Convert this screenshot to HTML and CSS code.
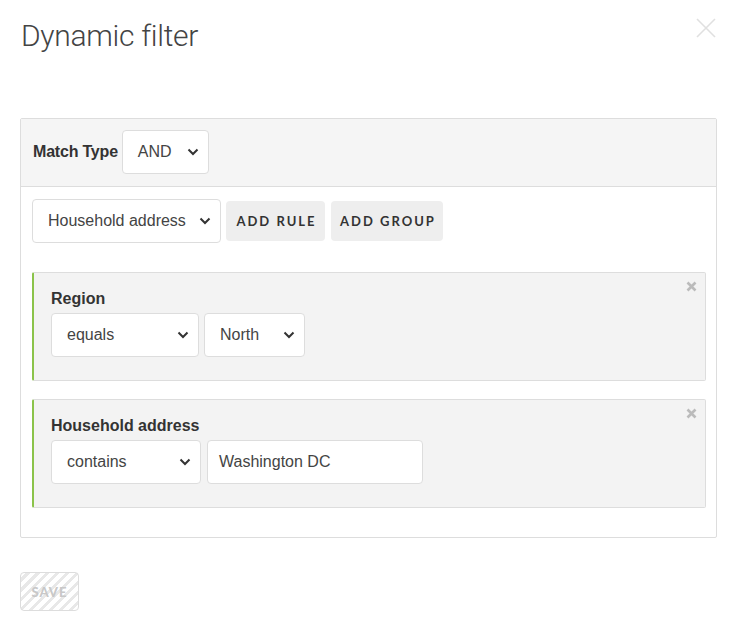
FILE: index.html
```html
<!DOCTYPE html>
<html>
<head>
<meta charset="utf-8">
<link rel="stylesheet" href="styles.css">
</head>
<body>
<div class="modal">
  <div class="modal-head">
    <h1 class="title">Dynamic filter</h1>
    <button class="close" aria-label="Close">
      <svg width="20" height="20" viewBox="0 0 20 20"><path d="M1 1 L19 19 M19 1 L1 19" stroke="#e0e0e0" stroke-width="1.6" fill="none"/></svg>
    </button>
  </div>

  <div class="panel">
    <div class="panel-head">
      <span class="label">Match Type</span>
      <div class="select sel-and"><span>AND</span><svg class="chev" width="12" height="8" viewBox="0 0 12 8"><path d="M1.5 1.5 L6 6 L10.5 1.5" stroke="#333" stroke-width="2" fill="none"/></svg></div>
    </div>
    <div class="panel-body">
      <div class="toolbar">
        <div class="select sel-field"><span>Household address</span><svg class="chev" width="12" height="8" viewBox="0 0 12 8"><path d="M1.5 1.5 L6 6 L10.5 1.5" stroke="#333" stroke-width="2" fill="none"/></svg></div>
        <button class="btn btn-rule">ADD RULE</button>
        <button class="btn btn-group">ADD GROUP</button>
      </div>

      <div class="rule">
        <button class="remove" aria-label="Remove"><svg width="11" height="11" viewBox="0 0 11 11"><path d="M1.5 1.5 L9.5 9.5 M9.5 1.5 L1.5 9.5" stroke="#bbb" stroke-width="2.6" fill="none"/></svg></button>
        <div class="rule-label">Region</div>
        <div class="rule-row">
          <div class="select sel-op1"><span>equals</span><svg class="chev" width="12" height="8" viewBox="0 0 12 8"><path d="M1.5 1.5 L6 6 L10.5 1.5" stroke="#333" stroke-width="2" fill="none"/></svg></div>
          <div class="select sel-val"><span>North</span><svg class="chev" width="12" height="8" viewBox="0 0 12 8"><path d="M1.5 1.5 L6 6 L10.5 1.5" stroke="#333" stroke-width="2" fill="none"/></svg></div>
        </div>
      </div>

      <div class="rule">
        <button class="remove" aria-label="Remove"><svg width="11" height="11" viewBox="0 0 11 11"><path d="M1.5 1.5 L9.5 9.5 M9.5 1.5 L1.5 9.5" stroke="#bbb" stroke-width="2.6" fill="none"/></svg></button>
        <div class="rule-label">Household address</div>
        <div class="rule-row rule-row2">
          <div class="select sel-op2"><span>contains</span><svg class="chev" width="12" height="8" viewBox="0 0 12 8"><path d="M1.5 1.5 L6 6 L10.5 1.5" stroke="#333" stroke-width="2" fill="none"/></svg></div>
          <div class="input">Washington DC</div>
        </div>
      </div>
    </div>
  </div>

  <div class="footer">
    <button class="save" disabled>SAVE</button>
  </div>
</div>
</body>
</html>
```

FILE: styles.css
```css
* { box-sizing: border-box; }
html, body { margin: 0; padding: 0; background: #fff; }
body {
  font-family: "Liberation Sans", Arial, sans-serif;
  font-size: 16px;
  color: #333;
}
.modal {
  padding: 0 22px 0 20px;
}
.modal-head {
  height: 118px;
  display: flex;
  justify-content: space-between;
  align-items: flex-start;
}
.title {
  margin: 18px 0 0 1px;
  font-family: "Roboto Light", Roboto, sans-serif;
  font-weight: 300;
  font-size: 30px;
  line-height: 36px;
  letter-spacing: -0.3px;
  color: #444;
}
.close {
  margin-top: 18px;
  margin-right: 1px;
  padding: 0;
  border: 0;
  background: none;
  width: 20px;
  height: 20px;
}
.close svg { display: block; }

.panel {
  border: 1px solid #ddd;
  border-radius: 2px;
}
.panel-head {
  background: #f5f5f5;
  border-bottom: 1px solid #ddd;
  padding: 11px 12px 12px;
  display: flex;
  align-items: center;
  gap: 4px;
}
.label {
  font-weight: bold;
  font-size: 16px;
  letter-spacing: -0.2px;
}
.select {
  height: 44px;
  flex: none;
  background: #fff;
  border: 1px solid #ddd;
  border-radius: 4px;
  display: flex;
  align-items: center;
  justify-content: space-between;
  padding: 0 9px 0 15px;
  color: #444;
  font-size: 16px;
  white-space: nowrap;
}
.chev { display: block; flex: none; }
.sel-and { width: 87px; }
.sel-field { width: 189px; }
.sel-op1 { width: 148px; }
.sel-val { width: 101px; }
.sel-op2 { width: 150px; }

.panel-body {
  padding: 12px 10px 29px 11px;
}
.toolbar {
  display: flex;
  align-items: center;
  gap: 5px;
  margin-bottom: 29px;
}
.btn {
  height: 40px;
  flex: none;
  border: 0;
  border-radius: 4px;
  background: #eee;
  font-family: Lato, "Open Sans", sans-serif;
  font-weight: 700;
  font-size: 13px;
  letter-spacing: 2px;
  color: #333;
  padding: 0 0 0 2px;
  white-space: nowrap;
}
.btn-rule { width: 99px; }
.btn-group { width: 112px; margin-left: 1px; }

.rule {
  position: relative;
  background: #f3f3f3;
  border: 1px solid #ddd;
  border-left: 2px solid #8bc34a;
  border-radius: 2px;
  padding: 16px 18px 23px 17px;
  margin-bottom: 18px;
}
.rule:last-child { margin-bottom: 0; }
.remove {
  position: absolute;
  top: 8px;
  right: 8px;
  padding: 0;
  border: 0;
  background: none;
  width: 11px;
  height: 11px;
}
.remove svg { display: block; }
.rule-label {
  font-weight: bold;
  font-size: 16px;
  line-height: 20px;
  margin-bottom: 4px;
}
.rule-row {
  display: flex;
  gap: 5px;
}
.rule-row2 { gap: 6px; }
.input {
  width: 216px;
  height: 44px;
  background: #fff;
  border: 1px solid #ddd;
  border-radius: 4px;
  display: flex;
  align-items: center;
  padding: 0 11px;
  color: #444;
}

.footer {
  padding-top: 34px;
}
.save {
  width: 59px;
  height: 39px;
  border: 1px solid #ddd;
  border-radius: 4px;
  background: repeating-linear-gradient(-45deg, #fff 0 4px, #e8e8e8 4px 7px);
  font-family: Lato, "Open Sans", sans-serif;
  font-weight: 900;
  font-size: 13px;
  letter-spacing: 1px;
  color: #c8c8c8;
  padding: 0;
}
```
